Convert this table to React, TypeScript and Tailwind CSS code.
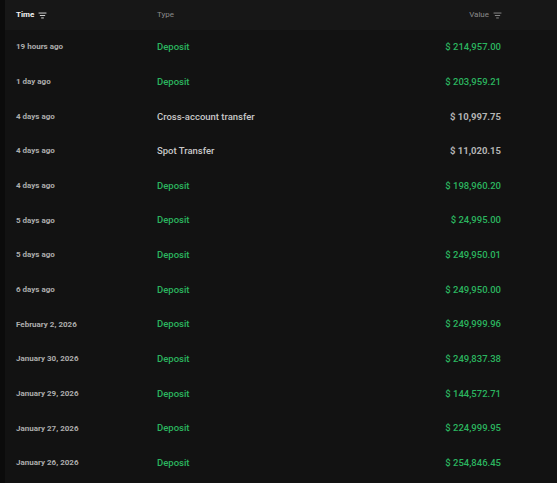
import React from "react";

type Row = { time: string; type: string; value: string; deposit: boolean };

const ROWS: Row[] = [
  { time: "19 hours ago", type: "Deposit", value: "$ 214,957.00", deposit: true },
  { time: "1 day ago", type: "Deposit", value: "$ 203,959.21", deposit: true },
  { time: "4 days ago", type: "Cross-account transfer", value: "$ 10,997.75", deposit: false },
  { time: "4 days ago", type: "Spot Transfer", value: "$ 11,020.15", deposit: false },
  { time: "4 days ago", type: "Deposit", value: "$ 198,960.20", deposit: true },
  { time: "5 days ago", type: "Deposit", value: "$ 24,995.00", deposit: true },
  { time: "5 days ago", type: "Deposit", value: "$ 249,950.01", deposit: true },
  { time: "6 days ago", type: "Deposit", value: "$ 249,950.00", deposit: true },
  { time: "February 2, 2026", type: "Deposit", value: "$ 249,999.96", deposit: true },
  { time: "January 30, 2026", type: "Deposit", value: "$ 249,837.38", deposit: true },
  { time: "January 29, 2026", type: "Deposit", value: "$ 144,572.71", deposit: true },
  { time: "January 27, 2026", type: "Deposit", value: "$ 224,999.95", deposit: true },
  { time: "January 26, 2026", type: "Deposit", value: "$ 254,846.45", deposit: true },
];

function SortIcon({ className }: { className?: string }) {
  return (
    <svg viewBox="0 0 10 8" className={className} fill="none" stroke="currentColor" strokeWidth="1.1">
      <path d="M0.5 1.2h9M2 4h6M3.5 6.8h3" />
    </svg>
  );
}

export default function App() {
  return (
    <div className="flex h-[483px] w-[557px] overflow-hidden bg-[#121212]" style={{ fontFamily: "Roboto, 'Liberation Sans', sans-serif" }}>
      <div className="w-[5px] shrink-0 bg-[#0b0b0b]" />
      <div className="flex-1">
        {/* header */}
        <div className="flex h-[30px] items-center bg-[#171717] pl-[11px] pr-[55px] text-[8px]">
          <div className="flex w-[141px] items-center gap-[4px] font-bold text-[#f2f2f2]">
            Time <SortIcon className="h-[7px] w-[9px] text-[#d8d8d8]" />
          </div>
          <div className="flex-1 text-[#8a8a8a]">Type</div>
          <div className="flex items-center gap-[4px] text-[#8a8a8a]">
            Value <SortIcon className="h-[7px] w-[9px] text-[#8a8a8a]" />
          </div>
        </div>

        {/* rows */}
        {ROWS.map((r, i) => (
          <div key={i} className="flex h-[34.67px] items-center pl-[11px] pr-[56px]">
            <div className="w-[141px] text-[8px] font-bold text-[#adadad]">{r.time}</div>
            <div className={`flex-1 text-[9.5px] font-medium ${r.deposit ? "text-[#2bb55f]" : "text-[#c8c8c8]"}`}>
              {r.type}
            </div>
            <div className={`text-[9.5px] ${r.deposit ? "font-medium text-[#2bb55f]" : "font-bold text-[#b4b4b4]"}`}>
              {r.value}
            </div>
          </div>
        ))}
      </div>
    </div>
  );
}
